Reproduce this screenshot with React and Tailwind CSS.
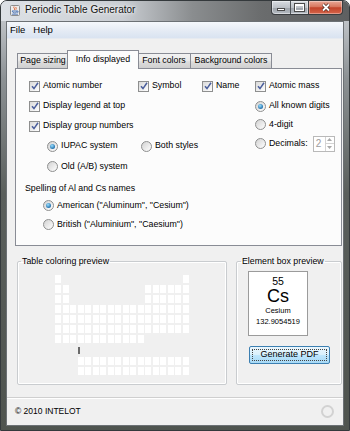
import React from 'react';

// periodic table layout: which of the 18 columns hold a cell, per period
const FULL = Array.from({ length: 18 }, (_, i) => i + 1);
const PERIODS = [
  [1, 18],
  [1, 2, 13, 14, 15, 16, 17, 18],
  [1, 2, 13, 14, 15, 16, 17, 18],
  FULL,
  FULL,
  FULL,
  [1, 2, 3, 4, 5, 6, 7, 8, 9, 10, 11, 12],
];

function Check({ label, className = '' }) {
  return (
    <div className={`flex items-center gap-[3px] ${className}`}>
      <span className="flex h-[11px] w-[11px] shrink-0 items-center justify-center border border-[#8e8f8f] bg-[linear-gradient(135deg,#d9d9d9,#ffffff)]">
        <svg width="8" height="8" viewBox="0 0 8 8">
          <path d="M1 4.2 L3 6.6 L7 0.8" fill="none" stroke="#4b5f9c" strokeWidth="1.5" />
        </svg>
      </span>
      <span className="whitespace-nowrap">{label}</span>
    </div>
  );
}

function Radio({ label, on, className = '' }) {
  return (
    <div className={`flex items-center gap-[3px] ${className}`}>
      <span className="flex h-[11px] w-[11px] shrink-0 items-center justify-center rounded-full border border-[#8e8f8f] bg-[linear-gradient(135deg,#d2d2d2,#ffffff)]">
        {on && <span className="h-[5px] w-[5px] rounded-full bg-[radial-gradient(circle_at_40%_35%,#9be0ff,#1c6aa8_75%)]" />}
      </span>
      <span className="whitespace-nowrap">{label}</span>
    </div>
  );
}

function Tab({ label, selected, className = '' }) {
  if (selected) {
    return (
      <div className={`relative z-10 -mb-px flex h-[19px] items-start justify-center border border-b-0 border-[#898c95] bg-[#fcfcfc] pt-[2px] ${className}`}>
        {label}
      </div>
    );
  }
  return (
    <div className={`flex h-[15px] items-center justify-center border border-b-0 border-[#898c95] bg-[linear-gradient(#f2f2f2,#ebebeb_45%,#dddddd_55%,#cfcfcf)] ${className}`}>
      {label}
    </div>
  );
}

function Cells({ cols }) {
  return (
    <div className="flex gap-x-[1.5px]">
      {FULL.map((c) => (
        <span key={c} className={`h-[8px] w-[6px] ${cols.includes(c) ? 'bg-white' : ''}`} />
      ))}
    </div>
  );
}

function FBlock() {
  return (
    <div className="flex gap-x-[1.5px] pl-[22.5px]">
      {Array.from({ length: 15 }, (_, i) => (
        <span key={i} className="h-[8px] w-[6px] bg-white" />
      ))}
    </div>
  );
}

export default function App() {
  return (
    <div className="h-[431px] w-[350px] overflow-hidden bg-white">
      <div className="flex h-[431px] w-[350px] flex-col overflow-hidden rounded-t-[7px] border border-[#34393c] bg-[linear-gradient(#cfd3d8,#8c9194_18%,#5a5f5c_45%,#4f544f)] font-['Liberation_Sans',Arial,sans-serif] text-[8.8px] text-black">
        {/* title bar */}
        <div className="flex h-[20px] shrink-0 items-start bg-[linear-gradient(90deg,#dde1e6,#c9cdd2_35%,#8a8d8f_55%,#6a6c6d_75%,#5e6061)]">
          <svg className="ml-[9px] mt-[4px]" width="10" height="11" viewBox="0 0 10 11">
            <rect x="0.5" y="0.5" width="9" height="10" rx="1" fill="#ececec" stroke="#8d8d8d" />
            <path d="M4 1.5 C3 3 5.5 3.5 4.5 5 M6 2 C5.5 3 6.8 3.6 6 4.6" fill="none" stroke="#e0561e" strokeWidth="0.9" />
            <path d="M2 6 H7.5 C8.5 6 8.5 7.6 7.3 7.6 M2.3 6.2 C2.3 8.5 7 8.5 7 6.2" fill="none" stroke="#3866b0" strokeWidth="0.9" />
            <path d="M1.8 9.2 H8" stroke="#3866b0" strokeWidth="0.8" />
          </svg>
          <span className="ml-[5px] mt-[3px] text-[10px] leading-[12px] text-[#111] [text-shadow:0_0_6px_#fff,0_0_3px_#fff]">
            Periodic Table Generator
          </span>
          <div className="ml-auto mr-[6px] flex h-[14px]">
            <div className="flex w-[38px] rounded-bl-[4px] border border-t-0 border-[#3a3d40] bg-[linear-gradient(#d8dce1,#bcc1c7_50%,#9da3aa_52%,#b4bac1)] shadow-[inset_0_0_0_1px_rgba(255,255,255,0.45)]">
              <div className="flex flex-1 items-center justify-center border-r border-[#50555a]">
                <span className="mt-[4px] h-[3px] w-[8px] border border-[#4a4a4a] bg-white" />
              </div>
              <div className="flex flex-1 items-center justify-center">
                <span className="h-[7px] w-[9px] border-[1.5px] border-t-[2.5px] border-white shadow-[0_0_0_1px_#4a4a4a]" />
              </div>
            </div>
            <div className="flex w-[34px] items-center justify-center rounded-br-[4px] border border-l-0 border-t-0 border-[#3a3d40] bg-[linear-gradient(#e9a897,#d8765e_45%,#c2432a_52%,#d6654a)] shadow-[inset_0_0_0_1px_rgba(255,255,255,0.35)]">
              <svg width="10" height="9" viewBox="0 0 10 9">
                <path d="M2 1.5 L8 7.5 M8 1.5 L2 7.5" stroke="#4a2a22" strokeWidth="3.2" />
                <path d="M2 1.5 L8 7.5 M8 1.5 L2 7.5" stroke="#ffffff" strokeWidth="1.8" />
              </svg>
            </div>
          </div>
        </div>

        {/* client area */}
        <div className="mx-[5px] flex h-[405px] shrink-0 flex-col border border-[#6c7175] bg-[#f0f0f0]">
          {/* menu bar */}
          <div className="flex h-[17px] shrink-0 items-center gap-[8px] border-b border-[#e6eaf0] bg-[linear-gradient(#f5f8fc,#e6ecf5_50%,#d9e3f1)] pl-[3px] text-[9.5px]">
            <span>File</span>
            <span>Help</span>
          </div>

          {/* tabs */}
          <div className="ml-[10px] mt-[11px] flex h-[18px] items-end">
            <Tab label="Page sizing" className="w-[52px]" />
            <Tab label="Info displayed" selected className="-mx-[2px] w-[72px]" />
            <Tab label="Font colors" className="w-[54px]" />
            <Tab label="Background colors" className="-ml-px w-[82px]" />
          </div>

          {/* tab panel */}
          <div className="ml-[8px] h-[178px] w-[327px] border border-[#898c95] bg-[#fcfcfc] pt-[7px]">
            <div className="flex pl-[13px]">
              <div className="w-[226px]">
                <div className="flex h-[20px] items-center">
                  <Check label="Atomic number" className="w-[109px]" />
                  <Check label="Symbol" className="w-[64px]" />
                  <Check label="Name" className="w-[53px]" />
                </div>
                <div className="flex h-[20px] items-center">
                  <Check label="Display legend at top" />
                </div>
                <div className="flex h-[20px] items-center">
                  <Check label="Display group numbers" />
                </div>
                <div className="flex h-[20px] items-center pl-[18px]">
                  <Radio label="IUPAC system" on className="w-[94px]" />
                  <Radio label="Both styles" />
                </div>
                <div className="flex h-[21px] items-center pl-[18px]">
                  <Radio label="Old (A/B) system" />
                </div>
              </div>
              <div>
                <div className="flex h-[20px] items-center">
                  <Check label="Atomic mass" />
                </div>
                <div className="flex h-[20px] items-center">
                  <Radio label="All known digits" on />
                </div>
                <div className="flex h-[17px] items-center">
                  <Radio label="4-digit" />
                </div>
                <div className="flex h-[21px] items-center">
                  <Radio label="Decimals:" />
                  <div className="ml-[5px] flex h-[16px] w-[22px] border border-[#b9b9b9] bg-white">
                    <span className="flex-1 pl-[2px] text-[10px] leading-[14px] text-[#9c9c9c]">2</span>
                    <div className="flex w-[9px] flex-col border-l border-[#d4d4d4]">
                      <span className="flex flex-1 items-center justify-center border-b border-[#d4d4d4]">
                        <svg width="5" height="3" viewBox="0 0 5 3"><path d="M0 3 L2.5 0 L5 3Z" fill="#a8a8a8" /></svg>
                      </span>
                      <span className="flex flex-1 items-center justify-center">
                        <svg width="5" height="3" viewBox="0 0 5 3"><path d="M0 0 L2.5 3 L5 0Z" fill="#a8a8a8" /></svg>
                      </span>
                    </div>
                  </div>
                </div>
              </div>
            </div>
            <div className="mt-[4px] pl-[9px]">
              <div className="flex h-[15px] items-center">Spelling of Al and Cs names</div>
              <div className="flex h-[19px] items-center pl-[18px]">
                <Radio label={'American ("Aluminum", "Cesium")'} on />
              </div>
              <div className="flex h-[19px] items-center pl-[18px]">
                <Radio label={'British ("Aluminium", "Caesium")'} />
              </div>
            </div>
          </div>

          {/* preview groups */}
          <div className="ml-[10px] mt-[10px] flex gap-[9px]">
            <fieldset className="h-[129px] w-[210px] rounded-[2px] border border-[#c9cccf] px-0 shadow-[inset_0_0_0_1px_#ffffff]">
              <legend className="ml-[3px] px-[1px] leading-[10px]">Table coloring preview</legend>
              <div className="mt-[9px] flex flex-col gap-y-[2px] pl-[37px]">
                {PERIODS.map((cols, i) => (
                  <Cells key={i} cols={cols} />
                ))}
                <span className="ml-[22.5px] mt-[2px] h-[7px] w-[2px] bg-[#6a6a6a]" />
                <div className="mt-[1px]">
                  <FBlock />
                </div>
                <FBlock />
              </div>
            </fieldset>
            <fieldset className="h-[129px] w-[106px] rounded-[2px] border border-[#c9cccf] px-0 shadow-[inset_0_0_0_1px_#ffffff]">
              <legend className="ml-[4px] px-[1px] leading-[10px]">Element box preview</legend>
              <div className="ml-[11px] mt-[5px] flex h-[65px] w-[60px] flex-col items-center border border-[#9b9b9b] bg-white pt-[3px]">
                <span className="text-[10.5px] leading-[12px]">55</span>
                <span className="text-[18px] leading-[18px]">Cs</span>
                <span className="mt-[1px] text-[7.5px] leading-[10px]">Cesium</span>
                <span className="mt-[1px] text-[7.5px] leading-[10px]">132.9054519</span>
              </div>
              <div className="ml-[12px] mt-[10px] flex h-[18px] w-[81px] rounded-[2px] border border-[#3c7fb1] bg-[linear-gradient(#eaf6fd,#d9f0fc_50%,#bee6fd_52%,#a7d9f5)] p-[2px] text-[9px]">
                <span className="flex flex-1 items-center justify-center border border-dotted border-[#444]">Generate PDF</span>
              </div>
            </fieldset>
          </div>

          {/* status / footer */}
          <div className="mt-auto flex h-[28px] items-center border-t border-[#cfcfcf] pl-[8px] pr-[9px] shadow-[inset_0_1px_0_#ffffff]">
            <span className="text-[8.5px]">© 2010 INTELOT</span>
            <span className="ml-auto h-[13px] w-[13px] rounded-full border-2 border-[#d2d2d2]" />
          </div>
        </div>
      </div>
    </div>
  );
}
